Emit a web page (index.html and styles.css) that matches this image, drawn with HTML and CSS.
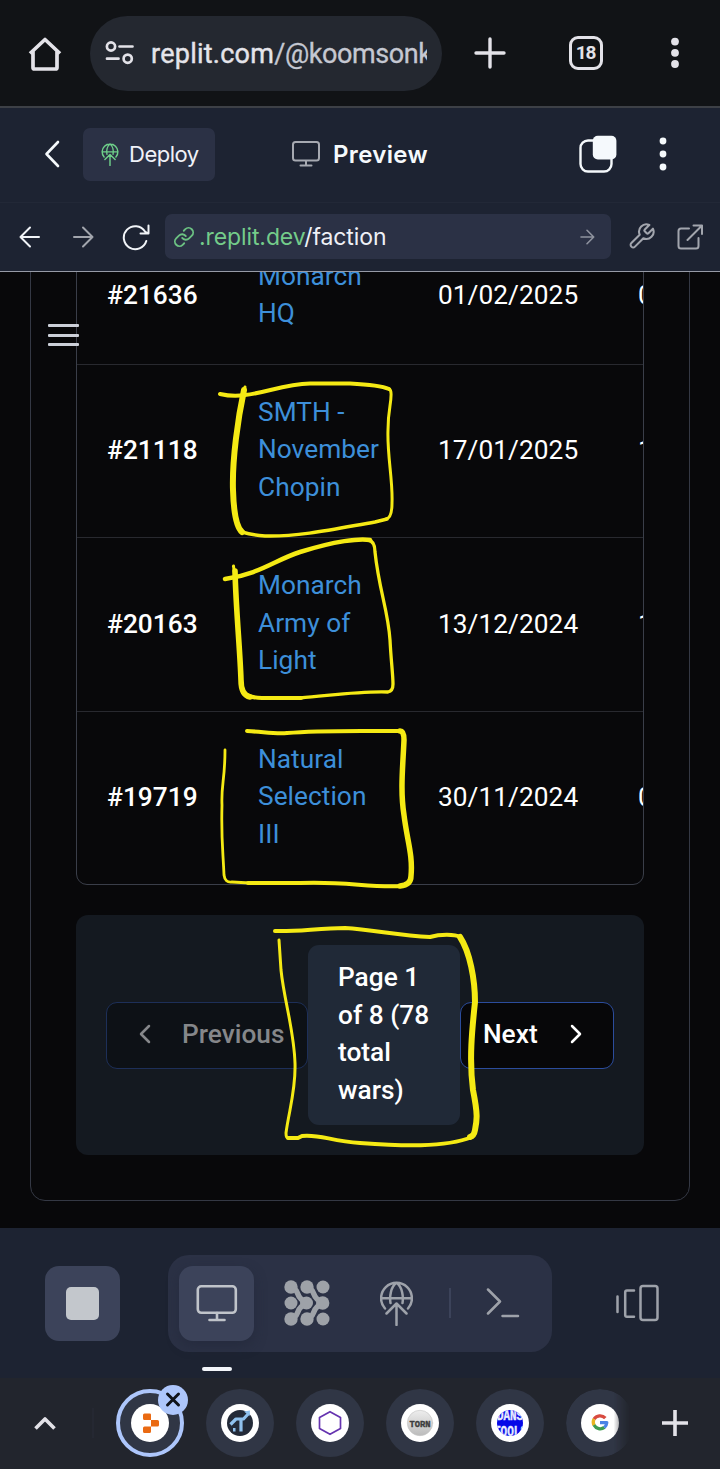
FILE: index.html
```html
<!DOCTYPE html>
<html lang="en">
<head>
<meta charset="utf-8">
<title>Preview</title>
<link rel="stylesheet" href="styles.css">
</head>
<body>
<div class="screen">
  <header class="browser-bar">
    <svg class="home" width="36" height="36" viewBox="0 0 36 36"><path d="M3 18.500 L18 4.500 L33 18.500 M6 16 V32.500 Q6 34 7.500 34 H28.500 Q30 34 30 32.500 V16"/></svg>
    <div class="omnibox">
      <svg class="tune" width="30" height="26" viewBox="0 0 30 26"><circle cx="6" cy="6.500" r="4.100"/><path d="M14.500 6.500 H27.500 M2 18.700 H13.500"/><circle cx="22.700" cy="18.700" r="4.100"/></svg>
      <span class="omni-text"><b>replit.com</b>/@koomsonk</span>
    </div>
    <svg class="plus" width="32" height="32" viewBox="0 0 32 32"><path d="M16 2 V30 M2 16 H30"/></svg>
    <span class="tab-count">18</span>
    <svg class="dots" width="8" height="32" viewBox="0 0 8 32"><circle cx="4" cy="4.600" r="3.900"/><circle cx="4" cy="15.800" r="3.900"/><circle cx="4" cy="27" r="3.900"/></svg>
  </header>

  <div class="app-head">
    <svg class="back" width="16" height="28" viewBox="0 0 16 28"><path d="M14 2 L2.500 14 L14 26"/></svg>
    <div class="deploy">
      <svg width="18" height="23" viewBox="0 0 33 45"><use href="#globe"/></svg>
      <span>Deploy</span>
    </div>
    <div class="head-title">
      <svg width="28" height="26" viewBox="0 0 28 26"><rect x="1" y="1" width="26" height="18.500" rx="2.500"/><path d="M14 20 V24.500 M8.500 24.500 H19.500"/></svg>
      <span>Preview</span>
    </div>
    <svg class="windows" width="38" height="38" viewBox="0 0 38 38"><rect class="win-line" x="1.500" y="5.500" width="31" height="31" rx="7.500"/><rect class="win-fill" x="13.800" y="0.800" width="23.600" height="23.600" rx="5"/></svg>
    <svg class="dots head-dots" width="8" height="34" viewBox="0 0 8 34"><circle cx="4" cy="4" r="3.400"/><circle cx="4" cy="17" r="3.400"/><circle cx="4" cy="30" r="3.400"/></svg>
  </div>

  <div class="url-bar">
    <svg class="arrow-l" width="21" height="22" viewBox="0 0 21 22"><path d="M20 11 H1.500 M11 1.500 L1.500 11 L11 20.500"/></svg>
    <svg class="arrow-r" width="21" height="22" viewBox="0 0 21 22"><path d="M1 11 H19.500 M10 1.500 L19.500 11 L10 20.500"/></svg>
    <svg class="reload" width="30" height="28" viewBox="0 0 30 28"><path d="M25.300 18 A11.500 11.500 0 1 1 24 8.500 L27 10.500 M19.500 10.500 H27.500 V2.500"/></svg>
    <div class="address">
      <svg class="link" width="22" height="22" viewBox="0 0 24 24"><path d="M10 13a5 5 0 0 0 7.540.540l3-3a5 5 0 0 0-7.070-7.070l-1.720 1.710M14 11a5 5 0 0 0-7.540-.540l-3 3a5 5 0 0 0 7.070 7.070l1.710-1.710"/></svg>
      <span class="address-text"><span class="host">.replit.dev</span>/faction</span>
      <svg class="go" width="15" height="16" viewBox="0 0 15 16"><path d="M1 8 H13.500 M7 1.300 L13.700 8 L7 14.700"/></svg>
    </div>
    <svg class="wrench" width="29" height="29" viewBox="0 0 24 24"><path d="M14.700 6.300a1 1 0 0 0 0 1.400l1.600 1.600a1 1 0 0 0 1.400 0l3.770-3.770a6 6 0 0 1-7.940 7.940l-6.910 6.910a2.120 2.120 0 0 1-3-3l6.910-6.910a6 6 0 0 1 7.940-7.940l-3.760 3.760z"/></svg>
    <svg class="external" width="26" height="26" viewBox="0 0 26 26"><path d="M12 4.500 H4 Q1.500 4.500 1.500 7 V22 Q1.500 24.500 4 24.500 H19 Q21.500 24.500 21.500 22 V14 M16.500 1.500 H25 V10 M25 1.500 L10.500 16"/></svg>
  </div>

  <main class="preview">
    <div class="menu"><i></i><i></i><i></i></div>
    <section class="panel">
      <div class="wars">
        <div class="war"><b>#21636</b><a>Monarch HQ</a><span>01/02/2025</span><span>0</span></div>
        <div class="war"><b>#21118</b><a>SMTH - November Chopin</a><span>17/01/2025</span><span>1</span></div>
        <div class="war"><b>#20163</b><a>Monarch Army of Light</a><span>13/12/2024</span><span>1</span></div>
        <div class="war"><b>#19719</b><a>Natural Selection III</a><span>30/11/2024</span><span>0</span></div>
      </div>
      <nav class="pager">
        <div class="page-btn prev"><svg width="12" height="20" viewBox="0 0 12 20"><path d="M10 2 L2 10 L10 18"/></svg><span>Previous</span></div>
        <div class="page-info">Page 1<br>of 8 (78<br>total<br>wars)</div>
        <div class="page-btn next"><span>Next</span><svg width="12" height="20" viewBox="0 0 12 20"><path d="M2 2 L10 10 L2 18"/></svg></div>
      </nav>
    </section>
  </main>

  <div class="dock">
    <div class="tile stop"><i></i></div>
    <div class="tools">
      <div class="tile active"><svg class="monitor" width="42" height="38" viewBox="0 0 42 38"><rect x="1.800" y="2.300" width="38" height="26.500" rx="3.500"/><path d="M21 29 V36 M13.500 36 H28.500"/></svg></div>
      <svg class="agent" width="46" height="46" viewBox="0 0 46 46"><path class="agent-lines" d="M7 7 L11 9.500 C14 11 13 15.500 17 19 L22.500 23 L17 27 C13 30.500 14 35 11 36.500 L7 39 M23 7 L27 9.500 C30 11 29 15.500 33 19 L38.500 23 L33 27 C29 30.500 30 35 27 36.500 L23 39"/><circle cx="7" cy="7" r="6.700"/><circle cx="23" cy="7" r="6.700"/><circle cx="39" cy="7" r="6.500"/><circle cx="7" cy="23" r="6.500"/><circle cx="22.500" cy="23" r="6.500"/><circle cx="38.700" cy="23" r="6.700"/><circle cx="7" cy="39" r="6.700"/><circle cx="23" cy="39" r="6.700"/><circle cx="39" cy="39" r="6.500"/></svg>
      <svg class="globe" width="33" height="45" viewBox="0 0 33 45"><g id="globe"><path d="M5 27.500 A15.400 15.400 0 1 1 28 27.500 M1.500 17.300 H31.500 M10.500 22 C9.500 16 10.500 6 16.500 1.800 C22.500 6 23.500 16 22.500 22"/><path d="M16.500 44 V22.500 M6.500 32.500 L16.500 22.500 L26.500 32.500"/></g></svg>
      <i class="split"></i>
      <svg class="shell" width="36" height="32" viewBox="0 0 36 32"><path d="M3 2.500 L15 14.500 L3 26.500 M17.500 29 H33"/></svg>
    </div>
    <svg class="panes" width="44" height="38" viewBox="0 0 44 38"><path d="M2.500 12.500 V28 M19 6.500 H12 Q10.200 6.500 10.200 8.500 V31 Q10.200 32.800 12 32.800 H19"/><rect x="25.500" y="2" width="17" height="34" rx="2.500"/></svg>
    <i class="cursor-line"></i>
  </div>

  <footer class="tabs">
    <svg class="chev" width="24" height="16" viewBox="0 0 24 16"><path d="M2.500 13.500 L12 4 L21.500 13.500"/></svg>
    <i class="tab-line"></i>
    <div class="tab current"><span class="fav"><svg width="38" height="38" viewBox="0 0 38 38"><path fill="#ea6a12" d="M13.500 9.500 H18.800 Q20 9.500 20 10.700 V16 H13.500 Q12 16 12 14.500 V11 Q12 9.500 13.500 9.500 Z M20 16 H26.500 Q28 16 28 17.500 V21 Q28 22.500 26.500 22.500 H20 Z M13.500 22.500 H20 V27.500 Q20 29 18.500 29 H13.500 Q12 29 12 27.500 V24 Q12 22.500 13.500 22.500 Z"/></svg></span>
      <span class="close"><svg width="30" height="30" viewBox="0 0 30 30"><path d="M9.500 9 L20.500 20 M20.500 9 L9.500 20"/></svg></span></div>
    <div class="tab"><span class="fav"><svg width="38" height="38" viewBox="0 0 38 38"><circle cx="19" cy="19" r="13" fill="#232a38"/><path d="M9.500 20.500 L15 15 H22.500 L28 9 M20 15 V27.500" fill="none" stroke="#8fc1ee" stroke-width="3.200" stroke-linecap="butt"/><path fill="#8fc1ee" d="M23 7.500 L29 6.500 L28.500 12 Z M12 24 H14.500 V27.500 H12 Z"/></svg></span></div>
    <div class="tab"><span class="fav"><svg width="38" height="38" viewBox="0 0 38 38"><path d="M19 7.700 L29.500 13.500 V24.500 L19 30.300 L8.500 24.500 V13.500 Z" fill="none" stroke="#6634b0" stroke-width="1.700"/></svg></span></div>
    <div class="tab"><span class="fav"><svg width="38" height="38" viewBox="0 0 38 38"><defs><linearGradient id="silver" x2="0" y2="1"><stop offset="0" stop-color="#eee"/><stop offset="1" stop-color="#bbb"/></linearGradient></defs><circle cx="19" cy="19" r="12.700" fill="url(#silver)" stroke="#c4c4c4" stroke-width=".6"/><text class="torn" x="19" y="22.500" textLength="21" lengthAdjust="spacingAndGlyphs">TORN</text></svg></span></div>
    <div class="tab"><span class="fav"><svg width="38" height="38" viewBox="0 0 38 38"><clipPath id="disc"><circle cx="19" cy="19" r="13"/></clipPath><g clip-path="url(#disc)"><rect width="38" height="38" fill="#0508e8"/><text class="dans" x="19" y="16" textLength="26" lengthAdjust="spacingAndGlyphs">DANS</text><text class="dans" x="19.500" y="31.500" textLength="33" lengthAdjust="spacingAndGlyphs">TOOLS</text></g></svg></span></div>
    <div class="tab fading"><span class="fav"><svg width="38" height="38" viewBox="0 0 38 38"><g fill="none" stroke-width="3.300" stroke-linecap="butt"><path stroke="#d84b40" d="M24.300 14.200 A7 7 0 0 0 13 15.200"/><path stroke="#e9b520" d="M13 15 A7 7 0 0 0 13 21.200"/><path stroke="#3e9b50" d="M13 21.100 A7 7 0 0 0 23.400 23.400"/><path stroke="#4a83e6" d="M23.300 23.500 A7 7 0 0 0 25.800 18.700 H19"/></g></svg></span></div>
    <svg class="plus" width="28" height="28" viewBox="0 0 28 28"><path d="M14 1 V27 M1 14 H27"/></svg>
  </footer>

  <svg class="marker" width="720" height="1469" viewBox="0 0 720 1469">
    <path stroke-width="4" d="M220 394 Q233 397 245 395 C265 393 285 384 310 383.500 H350 Q380 385 389 389"/>
    <path stroke-width="3" d="M389 389 Q391.500 390 391 396 C391 405 388 410 388 430 C387 455 393 480 392 503 Q392 518 386 519"/>
    <path stroke-width="3.500" d="M387 519 L375 522 C340 528 300 537 265 536 Q252 535 242 532"/>
    <path stroke-width="6" d="M244 390 C238 418 232 460 233 490 Q234 525 242 532"/>
    <path stroke-width="3" d="M245 387 L243 398"/>
    <path stroke-width="4.500" d="M225 579 C260 574 275 560 300 552 C335 541 360 538 370 540"/>
    <path stroke-width="3.300" d="M368 540 Q375 541 375 552 C379 590 388 610 390 640 C391 660 393 675 393 684 Q393 691 388 692 C360 691 335 695 300 698"/>
    <path stroke-width="4" d="M301 698 H262 Q249 698 243 692"/>
    <path stroke-width="5.600" d="M235 571 C236 610 240 650 241 680 Q241 695 250 697"/>
    <path stroke-width="3" d="M233.500 566 L235 578"/>
    <path stroke-width="4" d="M247 731 C265 732 275 734 287 733 C320 730 360 731 400 731"/>
    <path stroke-width="5.500" d="M400 731 Q404 731 404 740 C403 765 400 790 404 815 C407 840 413 855 411 876 Q411 885 400 886"/>
    <path stroke-width="4" d="M402 886 C370 888 345 881 300 883 H248"/>
    <path stroke-width="2.800" d="M250 883 L232 882 Q225 883 224 875 C223 850 221 840 222 805 C221 785 225 780 225 750"/>
    <path stroke-width="4" d="M275 931 C295 932 320 928 345 928 C375 930 400 936 430 937 C440 934 455 934 460 937"/>
    <path stroke-width="6" d="M460 937 C470 952 475 980 475 1002 C472 1030 469 1060 473 1090 C478 1115 477 1120 475 1130 Q474 1136 470 1137"/>
    <path stroke-width="4" d="M472 1137 C445 1148 400 1146 360 1143 C330 1141 320 1134 302 1136 L298 1138 H288"/>
    <path stroke-width="3" d="M288 1138 Q286 1138 286 1133 C289 1110 296 1090 295 1063 C294 1030 284 1000 281 970 L279 940"/>
  </svg>
</div>
</body>
</html>
```
FILE: styles.css
```css
* { box-sizing: border-box; }
body { margin: 0; background: #08080a; color: #fff; font-family: Roboto, sans-serif; }
svg { display: block; flex: none; fill: none; stroke-linecap: round; stroke-linejoin: round; }
i { display: block; }
.screen { position: relative; width: 720px; height: 1469px; display: flex; flex-direction: column; overflow: hidden; }
.marker { position: absolute; top: 0; left: 0; stroke: #f5ea14; }

.browser-bar { height: 108px; flex: none; display: flex; align-items: center; background: #111316; border-bottom: 2px solid #3d4046; padding: 0 41px 0 27px; stroke: #e3e2e8; }
.home { stroke-width: 3.7; stroke-linecap: butt; margin-top: -1px; }
.omnibox { width: 352px; height: 75px; margin-left: 27px; border-radius: 38px; background: #242830; display: flex; align-items: center; padding-left: 15px; }
.tune { stroke-width: 2.7; }
.omni-text { margin-left: 16px; width: 276px; overflow: hidden; white-space: nowrap; font-size: 27px; letter-spacing: -.4px; line-height: 36px; padding-top: 1px; color: #c5c8d2; -webkit-text-stroke: .3px #c5c8d2; }
.omni-text b { font-weight: 400; letter-spacing: .25px; color: #e4e4ea; -webkit-text-stroke: .4px #e4e4ea; }
.browser-bar .plus { margin-left: 32px; stroke-width: 3.4; }
.tab-count { width: 34px; height: 34px; margin-left: 63px; border: 3.500px solid #e3e2e8; border-radius: 9px; font: 700 19px/28px Roboto, sans-serif; letter-spacing: -1.200px; text-indent: -1px; text-align: center; color: #e3e2e8; }
.dots { fill: #e3e2e8; stroke: none; margin-left: auto; }

.app-head { height: 95px; flex: none; background: #1d2332; display: flex; align-items: center; padding: 0 53px 2px 44px; border-bottom: 1px solid #222837; font-family: Inter, sans-serif; }
.back { stroke: #f5f9fc; stroke-width: 2.600; }
.deploy { width: 132px; height: 53px; margin-left: 23px; background: #2b3145; border-radius: 7px; display: flex; align-items: center; padding-left: 18px; gap: 10px; font-size: 22px; color: #f0f2f8; stroke: #6fd08a; stroke-width: 2.800; }
.deploy span { letter-spacing: -.5px; }
.head-title { margin-left: 77px; display: flex; align-items: center; gap: 13px; font-size: 24px; font-weight: 600; color: #f5f9fc; stroke: #a6a9b1; stroke-width: 2; letter-spacing: .35px; }
.windows { margin-left: 151px; }
.win-line { stroke: #f5f9fc; stroke-width: 2.400; }
.win-fill { fill: #f5f9fc; }
.head-dots { fill: #f5f9fc; }

.url-bar { height: 69px; flex: none; background: #1d2332; border-bottom: 1.500px solid #969aa6; display: flex; align-items: center; padding: 0 17px 1px 19px; stroke-width: 2; stroke: #a2a5ad; font-family: Inter, sans-serif; }
.arrow-l, .reload { stroke: #f1f4f8; }
.arrow-r { margin-left: 33px; }
.reload { margin-left: 27px; }
.address { width: 446px; height: 45px; margin-left: 14px; border-radius: 7px; background: #2b3145; display: flex; align-items: center; padding: 0 16px 0 8px; }
.link { stroke: #6cc283; stroke-width: 2; }
.address-text { margin-left: 4px; font-size: 23px; letter-spacing: -.1px; color: #eef0f6; white-space: nowrap; }
.host { color: #74cc8a; }
.go { margin-left: auto; stroke: #8f939f; stroke-width: 1.600; }
.wrench { margin-left: 16px; stroke-width: 1.700; }
.external { margin-left: 21px; }

.preview { position: relative; height: 956px; flex: none; overflow: hidden; padding: 0 30px 27px; display: flex; flex-direction: column; justify-content: flex-end; }
.menu { position: absolute; left: 48px; top: 52px; display: grid; gap: 6.500px; z-index: 1; }
.menu i { width: 31px; height: 3px; background: #ccd0d9; border-radius: 1px; }
.panel { flex: none; border: 1px solid #343844; border-radius: 15px; padding: 45px; }
.wars { border: 1px solid #3a3e49; border-radius: 11px; overflow: hidden; }
.war { display: grid; grid-template-columns: 151px 180px 200px 200px; align-items: center; border-bottom: 1px solid #28292f; font-size: 26.250px; line-height: 37.500px; letter-spacing: .05px; }
.war:last-child { border-bottom: 0; }
.war > * { padding: 30px 0 30px 30px; }
.war b { font-weight: 500; }
.war a { padding: 29px 30px 31px; color: #3d8fd9; }
.pager { margin-top: 30px; height: 240px; border-radius: 12px; background: #141920; padding: 30px; display: flex; align-items: center; }
.page-btn { height: 67px; border: 1.500px solid #2b4c9c; border-radius: 11px; background: #070709; display: flex; align-items: center; font-size: 26.250px; font-weight: 500; stroke: #fff; stroke-width: 2.500; padding-bottom: 2px; }
.prev { width: 202px; padding-left: 32px; gap: 31px; border-color: #1d2f58; background: #0d1116; color: #85878a; stroke: #85878a; }
.next { width: 154px; padding-left: 22px; gap: 32px; }
.page-info { width: 152px; height: 180px; background: #202937; border-radius: 11px; padding: 14px 0 0 30px; font-size: 26.250px; line-height: 37.500px; font-weight: 500; white-space: nowrap; }

.dock { position: relative; height: 150px; flex: none; background: #1d2332; display: flex; align-items: center; padding: 0 61px 0 45px; stroke: #9ea2aa; }
.tile { width: 75px; height: 75px; border-radius: 14px; background: #3c435a; display: flex; align-items: center; justify-content: center; }
.stop i { width: 33px; height: 33px; border-radius: 5px; background: #c3c7cc; }
.tools { width: 384px; height: 97px; margin-left: 48px; border-radius: 21px; background: #2b3145; display: flex; align-items: center; padding-left: 11px; }
.active { box-shadow: 0 5px 12px #20263780; }
.monitor { stroke: #c0c4ca; stroke-width: 2.600; }
.agent { margin-left: 30px; fill: #9ea2a8; stroke: none; }
.agent-lines { fill: none; stroke: #9ea2a8; stroke-width: 5.500; }
.globe { margin-left: 50px; stroke-width: 2.500; }
.split { width: 2px; height: 30px; margin-left: 36px; background: #3c435a; }
.shell { margin-left: 34px; stroke-width: 2.500; }
.panes { margin-left: auto; stroke-width: 2.500; }
.cursor-line { position: absolute; left: 202px; top: 139px; width: 30px; height: 4px; border-radius: 2px; background: #f3f6fb; }

.tabs { height: 91px; flex: none; background: #22252d; display: flex; align-items: center; padding: 0 0 2px 33px; stroke: #e3e2e8; }
.chev { stroke-width: 3.600; stroke-linecap: butt; }
.tab-line { width: 2px; height: 30px; margin: 0 23px 0 35px; background: #252832; }
.tab { position: relative; flex: none; width: 68px; height: 68px; margin-right: 22px; border-radius: 50%; background: #303645; display: flex; align-items: center; justify-content: center; stroke: none; }
.fav { width: 38px; height: 38px; border-radius: 50%; background: #fff; overflow: hidden; }
.current { margin-left: -1px; border: 4px solid #adc6fb; }
.close { position: absolute; left: 38px; top: -8px; width: 30px; height: 30px; border-radius: 50%; background: #adc6fb; stroke: #10131a; stroke-width: 3; }
.fading { margin-right: 28px; -webkit-mask-image: linear-gradient(90deg, #000 70%, transparent 94%); mask-image: linear-gradient(90deg, #000 70%, transparent 94%); }
.tabs .plus { margin-left: -1px; stroke-width: 3.600; stroke-linecap: butt; }
.torn { font: 700 9.500px "Liberation Mono", monospace; fill: #3c3c3c; stroke: #3c3c3c; stroke-width: .4px; text-anchor: middle; }
.dans { font: 700 14px "Liberation Mono", monospace; fill: #e8ecff; stroke: #e8ecff; stroke-width: .4px; text-anchor: middle; }
```
